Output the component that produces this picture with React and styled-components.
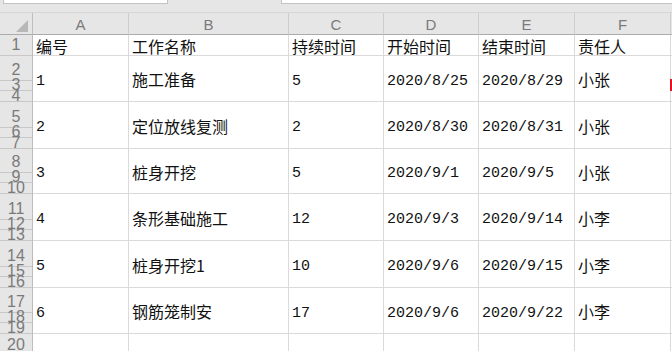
import React from 'react'
import styled, { createGlobalStyle } from 'styled-components'

const GlobalStyle = createGlobalStyle`
  html, body {
    margin: 0;
    padding: 0;
    background: #fff;
    overflow: hidden;
  }
`

const COLS = [
  { key: 'A', width: 96 },
  { key: 'B', width: 160 },
  { key: 'C', width: 95 },
  { key: 'D', width: 95 },
  { key: 'E', width: 96 },
  { key: 'F', width: 96 },
]

const ROWS = [
  { n: 2, height: 46, cells: ['1', '施工准备', '5', '2020/8/25', '2020/8/29', '小张'], flag: true },
  { n: 5, height: 47, cells: ['2', '定位放线复测', '2', '2020/8/30', '2020/8/31', '小张'] },
  { n: 8, height: 45, cells: ['3', '桩身开挖', '5', '2020/9/1', '2020/9/5', '小张'] },
  { n: 11, height: 47, cells: ['4', '条形基础施工', '12', '2020/9/3', '2020/9/14', '小李'] },
  { n: 14, height: 47, cells: ['5', '桩身开挖1', '10', '2020/9/6', '2020/9/15', '小李'] },
  { n: 17, height: 46, cells: ['6', '钢筋笼制安', '17', '2020/9/6', '2020/9/22', '小李'] },
]

const TITLES = ['编号', '工作名称', '持续时间', '开始时间', '结束时间', '责任人']
const MONO = [true, false, true, true, true, false]

const Sheet = styled.div`
  width: 672px;
  height: 351px;
  overflow: hidden;
  display: flex;
  flex-direction: column;
  background: #fff;
`

const TopBar = styled.div`
  height: 13px;
  flex: none;
  display: flex;
  align-items: flex-start;
  background: #e6e6e6;
  border-bottom: 1px solid #d6d6d6;
  box-sizing: border-box;
`

const NameBox = styled.div`
  margin-left: 3px;
  width: 165px;
  height: 4px;
  background: #fff;
  border: 1px solid #c3c3c3;
  border-top: none;
  box-sizing: border-box;
`

const FormulaBar = styled.div`
  margin-left: 113px;
  flex: 1;
  height: 4px;
  background: #fff;
  border: 1px solid #c3c3c3;
  border-top: none;
  border-right: none;
  box-sizing: border-box;
`

const Line = styled.div`
  display: flex;
  flex: none;
  height: ${(p) => p.h}px;
`

const Corner = styled.div`
  width: 33px;
  flex: none;
  background: #e6e6e6;
  border-right: 1px solid #bdbdbd;
  border-bottom: 1px solid #ababab;
  box-sizing: border-box;
  display: flex;
  align-items: flex-end;
  justify-content: flex-end;
  padding: 0 4px 2px 0;
`

const ColHead = styled.div`
  width: ${(p) => p.w}px;
  flex: none;
  background: #e6e6e6;
  border-right: 1px solid #cdcdcd;
  border-bottom: 1px solid #ababab;
  box-sizing: border-box;
  display: flex;
  align-items: center;
  justify-content: center;
  font-family: 'Liberation Sans', Arial, sans-serif;
  font-size: 15px;
  color: #7a7a7a;
  padding-top: 1px;
`

const Filler = styled.div`
  flex: 1;
  background: ${(p) => (p.head ? '#e6e6e6' : '#fff')};
  border-bottom: 1px solid ${(p) => (p.head ? '#ababab' : '#dadada')};
  box-sizing: border-box;
  position: relative;
`

const RowHead = styled.div`
  width: 33px;
  flex: none;
  background: #e6e6e6;
  border-right: 1px solid #bdbdbd;
  box-sizing: border-box;
  display: flex;
  flex-direction: column;
`

const SubRow = styled.div`
  height: ${(p) => p.h}px;
  flex: none;
  border-bottom: 1px solid #c8c8c8;
  box-sizing: border-box;
  display: flex;
  align-items: flex-end;
  justify-content: center;
  overflow: visible;
`

const RowNum = styled.span`
  font-family: 'Liberation Sans', Arial, sans-serif;
  font-size: 16px;
  line-height: 16px;
  color: #7a7a7a;
  margin-bottom: ${(p) => p.mb}px;
`

const Cell = styled.div`
  width: ${(p) => p.w}px;
  flex: none;
  border-right: 1px solid #dadada;
  border-bottom: 1px solid #dadada;
  box-sizing: border-box;
  display: flex;
  align-items: center;
  padding: ${(p) => (p.mono ? 5 : 2)}px 0 0 3px;
  white-space: nowrap;
  overflow: hidden;
  line-height: 17px;
  color: #111;
  font-family: ${(p) =>
    p.mono
      ? "'Liberation Mono', 'Noto Sans CJK SC', monospace"
      : "'Noto Sans CJK SC', 'Liberation Sans', sans-serif"};
  font-size: ${(p) => (p.mono ? 15 : 16)}px;
`

const Flag = styled.div`
  position: absolute;
  right: 0;
  top: 23px;
  width: 2px;
  height: 12px;
  background: #e81123;
`

const Triangle = () => (
  <svg width="12" height="12" viewBox="0 0 12 12">
    <path d="M12 0 L12 12 L0 12 Z" fill="#b8b8b8" />
  </svg>
)

const App = () => {
  return (
    <>
      <GlobalStyle />
      <Sheet>
        <TopBar>
          <NameBox />
          <FormulaBar />
        </TopBar>
        <Line h={22}>
          <Corner>
            <Triangle />
          </Corner>
          {COLS.map((c) => (
            <ColHead key={c.key} w={c.width}>
              {c.key}
            </ColHead>
          ))}
          <Filler head />
        </Line>
        <Line h={21}>
          <RowHead>
            <SubRow h={21}>
              <RowNum mb={2}>1</RowNum>
            </SubRow>
          </RowHead>
          {COLS.map((c, i) => (
            <Cell key={c.key} w={c.width}>
              {TITLES[i]}
            </Cell>
          ))}
          <Filler />
        </Line>
        {ROWS.map((r) => (
          <Line key={r.n} h={r.height}>
            <RowHead>
              <SubRow h={r.height - 21}>
                <RowNum mb={2}>{r.n}</RowNum>
              </SubRow>
              <SubRow h={10}>
                <RowNum mb={-3}>{r.n + 1}</RowNum>
              </SubRow>
              <SubRow h={11}>
                <RowNum mb={-3}>{r.n + 2}</RowNum>
              </SubRow>
            </RowHead>
            {COLS.map((c, i) => (
              <Cell key={c.key} w={c.width} mono={MONO[i]}>
                {r.cells[i]}
              </Cell>
            ))}
            <Filler>{r.flag && <Flag />}</Filler>
          </Line>
        ))}
        <Line h={22}>
          <RowHead>
            <SubRow h={22}>
              <RowNum mb={2}>20</RowNum>
            </SubRow>
          </RowHead>
          {COLS.map((c) => (
            <Cell key={c.key} w={c.width} />
          ))}
          <Filler />
        </Line>
      </Sheet>
    </>
  )
}

export default App
